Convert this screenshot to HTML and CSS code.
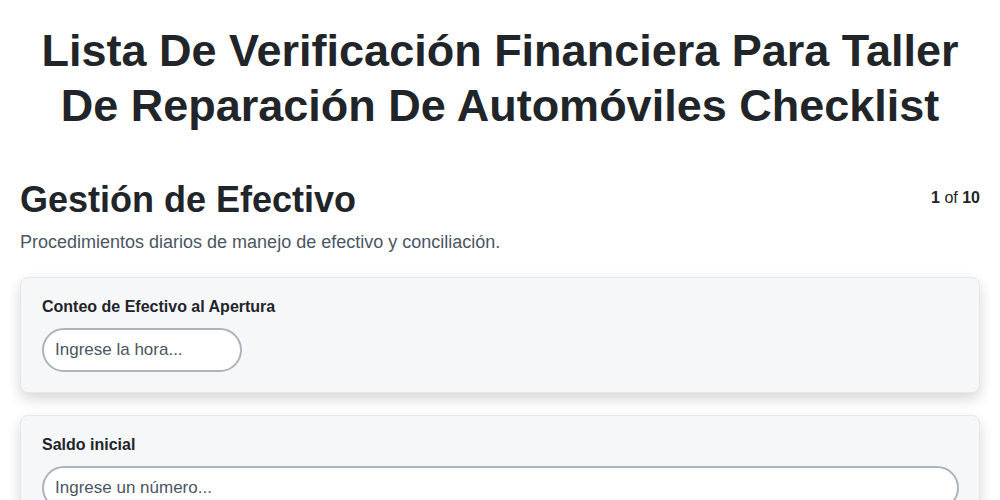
FILE: index.html
```html
<!DOCTYPE html>
<html lang="es">
<head>
  <meta charset="UTF-8">
  <title>Lista De Verificación Financiera</title>
  <link rel="stylesheet" href="styles.css">
</head>
<body>

  <div class="container">
    <h1 class="title">Lista De Verificación Financiera Para Taller De Reparación De Automóviles Checklist</h1>

    <div class="section-head">
      <h2>Gestión de Efectivo</h2>
      <div class="counter"><strong>1</strong> of <strong>10</strong></div>
    </div>
    <p class="section-desc">Procedimientos diarios de manejo de efectivo y conciliación.</p>

    <!-- Items of the current section -->
    <div class="item">
      <label for="apertura">Conteo de Efectivo al Apertura</label>
      <input type="text" id="apertura" class="input-short" placeholder="Ingrese la hora...">
    </div>

    <div class="item">
      <label for="saldo">Saldo inicial</label>
      <input type="text" id="saldo" placeholder="Ingrese un número...">
    </div>

    <div class="item">
      <label for="cierre">Conteo de Efectivo al Cierre</label>
      <input type="text" id="cierre" class="input-short" placeholder="Ingrese la hora...">
    </div>
  </div>

</body>
</html>
```

FILE: styles.css
```css
body {
  margin: 0;
  font-family: "Liberation Sans", Arial, sans-serif;
  background-color: #ffffff;
  color: #212529;
}
.container { padding: 20px; }
.title {
  font-size: 45px; line-height: 55px; text-align: center;
  margin: 3px 0 45px;
}
.section-head {
  display: flex; justify-content: space-between; align-items: flex-start;
}
.section-head h2 {
  font-size: 36px; margin: 0; line-height: 44px;
}
.counter { font-size: 16px; margin-top: 11px; color: #212529; }
.section-desc {
  color: #4b5563; font-size: 18px; line-height: 27px; margin: 7px 0 21px;
}
.item {
  background-color: #f6f7f9; border: 1px solid #e5e7eb;
  border-radius: 8px; padding: 20px 20px 20px 21px; margin-bottom: 22px;
  box-shadow: 0 6px 14px rgba(0, 0, 0, 0.16);
}
.item label {
  display: block; font-weight: bold; font-size: 16px; line-height: 18px;
  margin-bottom: 12px;
}
.item input {
  box-sizing: border-box; width: 100%; height: 44px;
  padding: 0 11px; border: 2px solid #adb3bb; border-radius: 22px;
  font-family: inherit; font-size: 17px; background: #fff; color: #212529;
}
.item input::placeholder { color: #4b5563; }
.item .input-short { width: 200px; }
```
